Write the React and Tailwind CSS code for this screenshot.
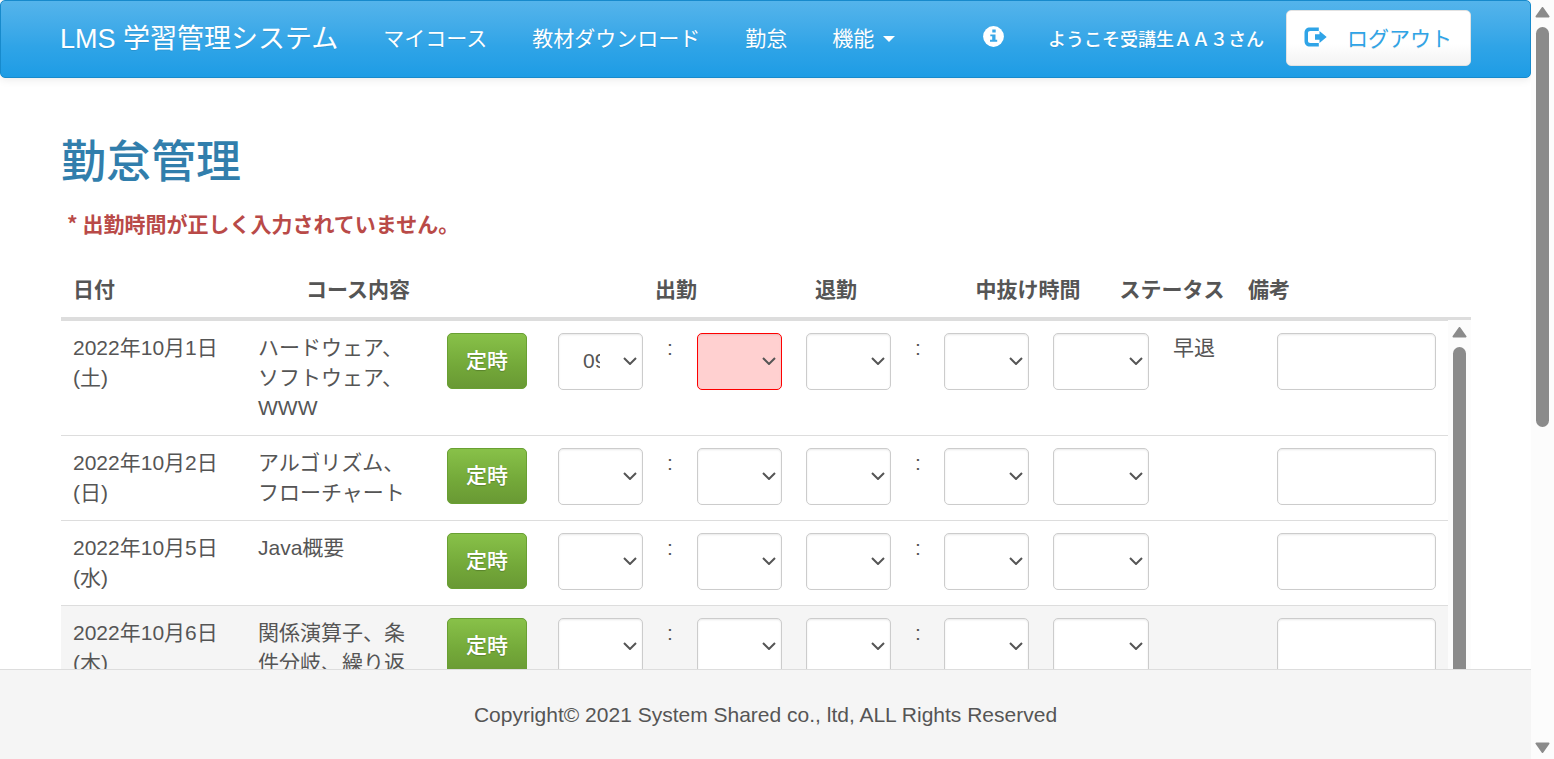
const ROWS = [
  { date: '2022年10月1日(土)', course: 'ハードウェア、ソフトウェア、WWW', startHour: '09', invalid: true, status: '早退' },
  { date: '2022年10月2日(日)', course: 'アルゴリズム、フローチャート' },
  { date: '2022年10月5日(水)', course: 'Java概要' },
  { date: '2022年10月6日(木)', course: '関係演算子、条件分岐、繰り返し', shaded: true },
];

const HOURS = ['', '09', '10', '11', '12', '13', '14', '15', '16', '17', '18'];
const MINUTES = ['', '00', '15', '30', '45'];

function TimeSelect({ label, options, value = '', invalid = false }) {
  return (
    <div className="relative">
      <select
        aria-label={label}
        defaultValue={value}
        className={`block h-[57px] w-full appearance-none rounded-[5px] border pr-[42px] pl-6 shadow-[inset_0_1px_2px_rgba(0,0,0,0.09)] ${
          invalid ? 'border-[#fe0000] bg-[#ffd0d0]' : 'border-[#ccc] bg-white'
        }`}
      >
        {options.map((o) => (
          <option key={o} value={o}>{o}</option>
        ))}
      </select>
      <svg className="pointer-events-none absolute top-6 right-1.5 h-2 w-3.5" viewBox="0 0 14 8" fill="none" stroke="#555" strokeWidth="2">
        <path d="M1 1l6 6 6-6" />
      </svg>
    </div>
  );
}

function Header() {
  return (
    <header className="flex h-[78px] shrink-0 items-center rounded-[5px] border border-[#178acc] bg-linear-to-b from-[#54b4eb] from-0% via-[#2fa4e7] via-60% to-[#1d9ce5] px-[59px] text-white shadow-[0_1px_10px_rgba(0,0,0,0.1)] [text-shadow:0_1px_0_rgba(0,0,0,0.1)]">
      <a href="#" className="mr-[22px] text-[27px] whitespace-nowrap">LMS 学習管理システム</a>
      <nav className="flex whitespace-nowrap">
        <a href="#" className="px-[23px]">マイコース</a>
        <a href="#" className="px-[22px]">教材ダウンロード</a>
        <a href="#" className="px-[23px]">勤怠</a>
        <a href="#" className="flex items-center gap-[9px] px-[22px]">
          機能
          <svg className="h-1.5 w-3" viewBox="0 0 12 6" fill="currentColor"><path d="M0 0h12L6 6z" /></svg>
        </a>
      </nav>
      <div className="ml-auto flex items-center whitespace-nowrap">
        <a href="#" aria-label="お知らせ" className="mr-11 pb-1.5">
          <svg className="size-[21px]" viewBox="0 0 21 21">
            <circle cx="10.5" cy="10.5" r="10.4" fill="#fff" />
            <path d="M9.300 3.600h3.400v2.800H9.300zM7.300 8.400h5.200v5.400h1.700v2H7v-2h2.200v-3.500H7.300z" fill="#3aa8e8" />
          </svg>
        </a>
        <span className="mr-[22px] pt-0.5 text-lg font-medium">ようこそ受講生ＡＡ３さん</span>
        <button type="button" className="mb-0.5 flex h-14 w-[185px] items-center gap-5 rounded-[5px] border border-[#e2e2e2] bg-linear-to-b from-white via-white via-60% to-[#f3f3f3] pl-[17px] text-[#2fa4e7] [text-shadow:0_1px_0_rgba(0,0,0,0.1)]">
          <svg className="mb-0.5 h-5 w-[23px]" viewBox="0 0 23 20" fill="currentColor">
            <path d="M14.800 0.500H6C2.500 0.500 0.500 2.500 0.500 6v8c0 3.500 2 5.500 5.500 5.500h8.800V16H6.300C4.800 16 4 15.300 4 14V6C4 4.700 4.800 4 6.300 4h8.500z" />
            <path d="M15.500 4v3.300H11v5.400h4.500V16L22.700 10z" />
          </svg>
          <span className="pt-0.5">ログアウト</span>
        </button>
      </div>
    </header>
  );
}

function ScrollArrow({ className = '' }) {
  return (
    <svg className={`h-[11px] w-[15px] shrink-0 ${className}`} viewBox="0 0 15 11">
      <path d="M7.500 1L13.500 9.500H1.500z" fill="#8b8b8b" stroke="#8b8b8b" strokeWidth="2" strokeLinejoin="round" />
    </svg>
  );
}

export default function App() {
  return (
    <div className="flex h-screen overflow-hidden bg-white font-['Liberation_Sans','Noto_Sans_CJK_JP',sans-serif] text-[21px] leading-[30px] text-[#555]">
      <div className="flex min-w-0 flex-1 flex-col">
        <Header />
        <main className="flex min-h-0 flex-1 flex-col overflow-hidden pr-[60px] pl-[61px]">
          <h1 className="mt-[60px] text-[45px] leading-[50px] font-medium text-[#317eac]">勤怠管理</h1>
          <p className="mt-5 pl-1.5 font-['Noto_Sans_CJK_JP',sans-serif] font-bold text-[#b94a48]">* 出勤時間が正しく入力されていません。</p>
          <table className="mt-[26px] w-full shrink-0 table-fixed border-b-[3px] border-[#ddd]">
            <colgroup>
              <col className="w-[186px]" />
              <col className="w-[222px]" />
              <col className="w-[151px]" />
              <col className="w-[112px]" />
              <col className="w-[208px]" />
              <col className="w-[176px]" />
              <col className="w-[112px]" />
              <col />
            </colgroup>
            <thead>
              <tr className="h-[54px] whitespace-nowrap">
                <th className="pl-3 text-left">日付</th>
                <th>コース内容</th>
                <td></td>
                <th>出勤</th>
                <th>退勤</th>
                <th>中抜け時間</th>
                <th>ステータス</th>
                <th className="pl-5 text-left">備考</th>
              </tr>
            </thead>
          </table>
          <div className="flex min-h-0 flex-1">
            <div className="min-w-0 flex-1 overflow-hidden">
              <table className="w-full table-fixed">
                <colgroup>
                  <col className="w-[185px]" />
                  <col className="w-[189px]" />
                  <col className="w-[111px]" />
                  <col className="w-[109px]" />
                  <col className="w-[30px]" />
                  <col className="w-[109px]" />
                  <col className="w-[109px]" />
                  <col className="w-[29px]" />
                  <col className="w-[109px]" />
                  <col className="w-[120px]" />
                  <col className="w-[104px]" />
                  <col />
                </colgroup>
                <tbody>
                  {ROWS.map((r) => (
                    <tr key={r.date} className={`border-t border-[#ddd] align-top [&>td]:px-3 [&>td]:py-3 ${r.shaded ? 'bg-[#f5f5f5]' : ''}`}>
                      <td>{r.date}</td>
                      <td>{r.course}</td>
                      <td>
                        <button type="button" className="block h-14 w-20 rounded-[5px] border border-[#69a033] bg-linear-to-b from-[#88c149] via-[#73a839] via-60% to-[#699934] font-medium text-white [text-shadow:0_1px_1px_rgba(0,0,0,0.2)]">定時</button>
                      </td>
                      <td><TimeSelect label="出勤（時）" options={HOURS} value={r.startHour} /></td>
                      <td>:</td>
                      <td><TimeSelect label="出勤（分）" options={MINUTES} invalid={r.invalid} /></td>
                      <td><TimeSelect label="退勤（時）" options={HOURS} /></td>
                      <td>:</td>
                      <td><TimeSelect label="退勤（分）" options={MINUTES} /></td>
                      <td><TimeSelect label="中抜け時間" options={MINUTES} /></td>
                      <td>{r.status}</td>
                      <td>
                        <input type="text" aria-label="備考" className="block h-[57px] w-full rounded-[5px] border border-[#ccc] bg-white px-3 shadow-[inset_0_1px_2px_rgba(0,0,0,0.09)]" />
                      </td>
                    </tr>
                  ))}
                </tbody>
              </table>
            </div>
            <div className="flex w-[23px] flex-col items-center overflow-hidden bg-[#fcfcfc] pt-[7px]">
              <ScrollArrow />
              <div className="mt-[9px] w-[13px] flex-1 rounded-t-full bg-[#8b8b8b]" />
            </div>
          </div>
        </main>
        <footer className="flex h-[90px] shrink-0 items-center justify-center border-t border-[#ddd] bg-[#f5f5f5]">
          Copyright© 2021 System Shared co., ltd, ALL Rights Reserved
        </footer>
      </div>
      <div className="flex w-[23px] shrink-0 flex-col items-center bg-[#fcfcfc] pt-[7px] pb-1.5">
        <ScrollArrow />
        <div className="mt-[9px] h-[400px] w-[13px] rounded-full bg-[#8b8b8b]" />
        <ScrollArrow className="mt-auto rotate-180" />
      </div>
    </div>
  );
}
